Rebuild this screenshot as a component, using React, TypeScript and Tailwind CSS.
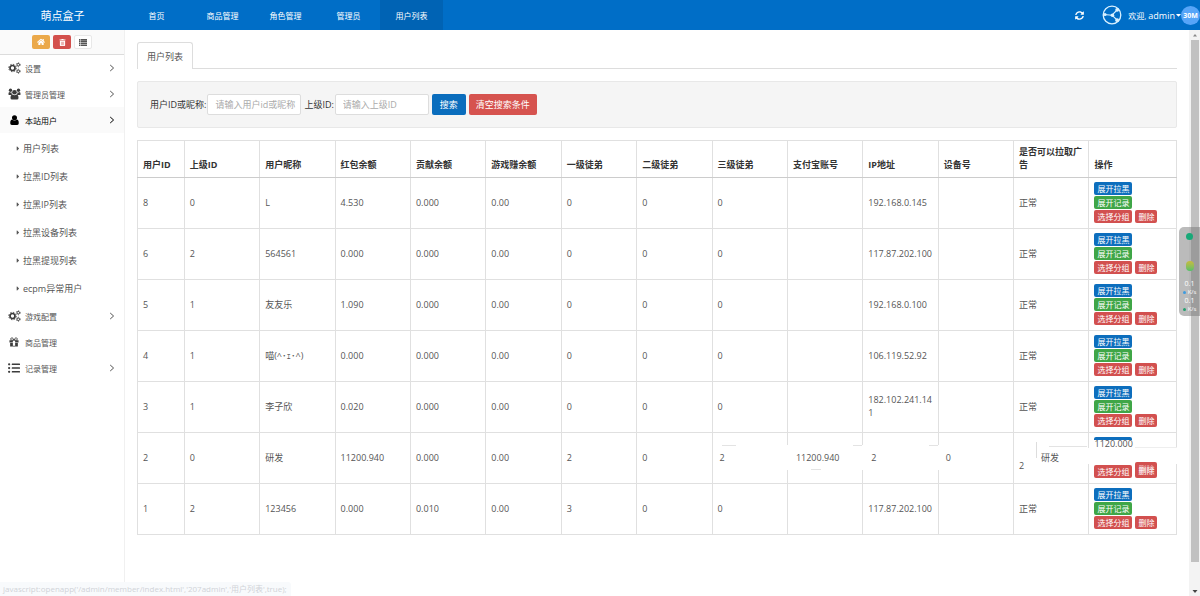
import type { ReactNode } from "react";
import { FaCaretDown, FaCaretRight, FaHome, FaListUl, FaSyncAlt, FaTrashAlt } from "react-icons/fa";

const nav = ["首页", "商品管理", "角色管理", "管理员", "用户列表"];

const subItems = ["用户列表", "拉黑ID列表", "拉黑IP列表", "拉黑设备列表", "拉黑提现列表", "ecpm异常用户"];

function CogsIcon() {
  return (
    <svg viewBox="0 0 26 24" className="h-3 w-[13px]" fill="none" stroke="currentColor">
      <circle cx="9" cy="12" r="5" strokeWidth="3.4" />
      <circle cx="9" cy="12" r="7.4" strokeWidth="2" strokeDasharray="2.9 2.91" />
      <circle cx="20.5" cy="5.5" r="2.6" strokeWidth="2" />
      <circle cx="20.5" cy="5.5" r="4.2" strokeWidth="1.2" strokeDasharray="2 2.4" />
      <circle cx="20.5" cy="18.5" r="2.6" strokeWidth="2" />
      <circle cx="20.5" cy="18.5" r="4.2" strokeWidth="1.2" strokeDasharray="2 2.4" />
    </svg>
  );
}

function GroupIcon() {
  return (
    <svg viewBox="0 0 26 24" className="h-3 w-[13px]" fill="currentColor">
      <circle cx="5" cy="4.5" r="3.3" />
      <circle cx="21" cy="4.5" r="3.3" />
      <path d="M1 13V11q0-3 2-3 2 1.5 4.500 1Q6.500 12.500 8.500 14H3q-2 0-2-1zM25 13V11q0-3-2-3-2 1.500-4.500 1 1 3.500-1 5H23q2 0 2-1z" />
      <circle cx="13" cy="8.500" r="4.600" />
      <path d="M5 20q0-7 4-7 4 2.800 8 0 4 0 4 7 0 3-3 3H8q-3 0-3-3z" />
    </svg>
  );
}

function UserIcon() {
  return (
    <svg viewBox="0 0 20 22" className="h-[10px] w-[9px]" fill="currentColor">
      <circle cx="10" cy="6" r="5.600" />
      <path d="M0.500 18q0-8 4.500-8 5 4.200 10 0 4.500 0 4.500 8 0 4-3.500 4H4q-3.500 0-3.500-4z" />
    </svg>
  );
}

function GiftIcon() {
  return (
    <svg viewBox="0 0 22 22" className="size-[10px]" fill="none" stroke="currentColor">
      <path d="M11 7H6.500a2.600 2.600 0 1 1 2-4.200zM11 7h4.500a2.600 2.600 0 1 0-2-4.200z" strokeWidth="2" />
      <path d="M1 7h7.500v5H1zM13.500 7H21v5h-7.500zM2.500 13h6v8h-6zM13.500 13h6v8h-6z" fill="currentColor" stroke="none" />
      <path d="M8.500 20.300h5" strokeWidth="1.600" />
    </svg>
  );
}

function TableListIcon() {
  return (
    <svg viewBox="0 0 16 14" className="h-[7px] w-2" fill="currentColor">
      <path d="M0 0h3v2.800H0zM4 0h12v2.800H4zM0 3.700h3v2.800H0zM4 3.700h12v2.800H4zM0 7.400h3v2.800H0zM4 7.400h12v2.800H4zM0 11.100h3V14H0zM4 11.100h12V14H4z" />
    </svg>
  );
}

const menu: { label: string; icon: ReactNode; arrow?: boolean; active?: boolean; children?: string[] }[] = [
  { label: "设置", icon: <CogsIcon />, arrow: true },
  { label: "管理员管理", icon: <GroupIcon />, arrow: true },
  { label: "本站用户", icon: <UserIcon />, arrow: true, active: true, children: subItems },
  { label: "游戏配置", icon: <CogsIcon />, arrow: true },
  { label: "商品管理", icon: <GiftIcon /> },
  { label: "记录管理", icon: <FaListUl className="size-[12px]" />, arrow: true },
];

const columns = ["用户ID", "上级ID", "用户昵称", "红包余额", "贡献余额", "游戏赚余额", "一级徒弟", "二级徒弟", "三级徒弟", "支付宝账号", "IP地址", "设备号", "是否可以拉取广告", "操作"];

const rows = [
  ["8", "0", "L", "4.530", "0.000", "0.00", "0", "0", "0", "", "192.168.0.145", "", "正常"],
  ["6", "2", "564561", "0.000", "0.000", "0.00", "0", "0", "0", "", "117.87.202.100", "", "正常"],
  ["5", "1", "友友乐", "1.090", "0.000", "0.00", "0", "0", "0", "", "192.168.0.100", "", "正常"],
  ["4", "1", "喵(^･ｪ･^)", "0.000", "0.000", "0.00", "0", "0", "0", "", "106.119.52.92", "", "正常"],
  ["3", "1", "李子欣", "0.020", "0.000", "0.00", "0", "0", "0", "", "182.102.241.141", "", "正常"],
  ["2", "0", "研发", "11200.940", "0.000", "0.00", "2", "0", "2", "11200.940", "2", "0", "2"],
  ["1", "2", "123456", "0.000", "0.010", "0.00", "3", "0", "0", "", "117.87.202.100", "", "正常"],
];

function Chevron() {
  return (
    <svg viewBox="0 0 6 8" className="h-2 w-1.5" fill="none" stroke="currentColor" strokeWidth="1">
      <path d="M1.2 1 4.6 4 1.2 7" />
    </svg>
  );
}

function Sidebar() {
  return (
    <aside className="flex w-[125px] shrink-0 flex-col border-r border-[#f0f0f0] bg-white">
      <div className="flex h-[25px] items-center justify-center gap-[3px] border-b border-[#dcdcdc] bg-[#fafafa]">
        <button aria-label="主页" className="flex h-[14px] w-[18px] items-center justify-center rounded-[2px] bg-[#eba94a] text-white"><FaHome className="size-[8px]" /></button>
        <button aria-label="清空" className="flex h-[14px] w-[18px] items-center justify-center rounded-[2px] bg-[#d3504d] text-white"><FaTrashAlt className="size-[7px]" /></button>
        <button aria-label="列表" className="flex h-[14px] w-[18px] items-center justify-center rounded-[2px] border border-[#e8e8e8] bg-white text-[#555]"><TableListIcon /></button>
      </div>
      <ul className="text-[#555]">
        {menu.map((m) => (
          <li key={m.label}>
            <a href="#" className={m.active ? "flex h-[26px] items-center bg-[#fafafa] pr-[9px] pl-[7px] text-black" : "flex h-[26px] items-center pr-[9px] pl-[7px]"}>
              <span className={m.active ? "flex w-[14px] justify-center" : "flex w-[14px] justify-center text-[#3c3c3c]"}>{m.icon}</span>
              <span className="ml-1 flex-1 text-[8px]">{m.label}</span>
              {m.arrow && <Chevron />}
            </a>
            {m.children && (
              <ul className="my-px">
                {m.children.map((s) => (
                  <li key={s}>
                    <a href="#" className="flex h-7 items-center gap-[3px] pl-4">
                      <FaCaretRight className="h-[7px] w-1" />
                      {s}
                    </a>
                  </li>
                ))}
              </ul>
            )}
          </li>
        ))}
      </ul>
    </aside>
  );
}

function Header() {
  return (
    <header className="flex h-[30px] shrink-0 items-center bg-[#006ec7] text-white">
      <div className="w-[125px] text-center text-[11px]">萌点盒子</div>
      <nav className="flex h-full text-[8px]">
        {nav.map((n, i) => (
          <a key={n} href="#" className={i === 4 ? "flex w-[63px] items-center justify-center bg-[#0063b4]" : i === 0 ? "mr-[3px] flex w-[63px] items-center justify-center" : "flex w-[63px] items-center justify-center"}>{n}</a>
        ))}
      </nav>
      <div className="ml-auto flex items-center">
        <button aria-label="刷新"><FaSyncAlt className="size-[9px]" /></button>
        <svg viewBox="0 0 20 20" className="ml-[18px] size-5" fill="none" stroke="#d9f1ff" strokeWidth="1.3">
          <circle cx="10" cy="10" r="8.8" />
          <path d="M2 9.5 10 10.2 15 5M10 10.2 15 15" strokeWidth="1.1" />
          <g fill="#d9f1ff" stroke="none">
            <circle cx="3" cy="9.5" r="1.6" />
            <circle cx="10.4" cy="10.2" r="1.8" />
            <circle cx="15.2" cy="4.8" r="1.9" />
            <circle cx="15.2" cy="15.2" r="1.9" />
          </g>
        </svg>
        <button className="ml-[6px] flex items-center gap-px whitespace-nowrap">
          <span className="text-[9px]"><span className="text-[8px]">欢迎, </span>admin</span>
          <FaCaretDown className="h-2 w-[5px]" />
        </button>
        <span className="flex size-[19px] items-center justify-center rounded-full bg-[#57a5f8] text-[7px] font-bold">30M</span>
      </div>
    </header>
  );
}

function Actions() {
  return (
    <div className="flex flex-col items-start gap-px text-[8px] leading-[13px] text-white">
      <button className="h-[13px] rounded-[2px] bg-[#0d6ebd] px-[3px]">展开拉黑</button>
      <button className="h-[13px] rounded-[2px] bg-[#3fa647] px-[3px]">展开记录</button>
      <div className="flex gap-[3px]">
        <button className="h-[13px] rounded-[2px] bg-[#d2504f] px-[3px]">选择分组</button>
        <button className="h-[13px] rounded-[2px] bg-[#d2504f] px-[3px]">删除</button>
      </div>
    </div>
  );
}

function PatchedActions() {
  return (
    <div className="relative flex h-[41px] flex-col justify-between text-[8px] leading-[13px] text-white">
      <div className="absolute top-[11px] -right-[7px] -left-[7px] h-[16px] bg-white" />
      <div className="absolute top-[10px] -right-[6px] w-[42px] border-t border-[#eee]" />
      <div className="relative text-[9px] text-[#555]">1120.000</div>
      <div className="absolute top-0 left-0 h-[3px] w-[38px] rounded-t-[2px] bg-[#0d6ebd]" />
      <div className="flex items-end gap-[3px]">
        <button className="h-[13px] rounded-[2px] bg-[#d2504f] px-[3px]">选择分组</button>
        <button className="relative h-4 rounded-[2px] bg-[#d2504f] px-[3px] pt-px [text-shadow:0_-2px_0_#ffffff99]">删除</button>
      </div>
    </div>
  );
}

function PatchedCell({ index, value }: { index: number; value: string }) {
  if (index === 12) {
    return (
      <div className="relative pt-4">
        {value}
        <span className="absolute top-[3px] -right-1 w-[38px] border-t border-[#e3e3e3]" />
        <span className="absolute -top-px left-[17px] h-4 border-l border-[#ddd]" />
        <span className="absolute top-[8px] left-[22px] whitespace-nowrap">研发</span>
      </div>
    );
  }
  if (index === 11) {
    return <div className="relative -ml-[6px] bg-white py-[6px] pl-2">{value}</div>;
  }
  return (
    <div className={index === 8 ? "relative -mr-[6px] bg-white py-[6px] pl-[2px]" : "relative -mx-[6px] bg-white py-[6px] pl-[9px]"}>
      {value}
      <span className={index === 8 ? "absolute top-0 left-1 w-[14px] border-t border-[#e3e3e3]" : "absolute top-0 right-0 w-[10px] border-t border-[#e3e3e3]"} />
      {index === 9 && <span className="absolute bottom-0 left-6 w-[10px] border-t border-[#e3e3e3]" />}
    </div>
  );
}

function UserTable() {
  return (
    <table className="mt-3 w-full table-fixed border-collapse border border-[#e0e0e0] leading-[13px] text-[#555]">
      <colgroup>
        {columns.map((c, i) => (
          <col key={c} className={i === 0 ? "w-[4.5%]" : i === 13 ? "w-[8.4%]" : "w-[7.25%]"} />
        ))}
      </colgroup>
      <thead>
        <tr>
          {columns.map((c) => (
            <th key={c} className="h-[36px] border border-[#e0e0e0] border-b-[#ccc] px-[5px] pt-1 pb-[6px] text-left align-bottom font-bold text-[#333]">{c}</th>
          ))}
        </tr>
      </thead>
      <tbody>
        {rows.map((r) => (
          <tr key={r[0]}>
            {r.map((v, i) => (
              <td key={columns[i]} className="h-[51px] border border-[#e0e0e0] px-[5px] pb-[2px] break-all">
                {r[0] === "2" && i > 7 ? <PatchedCell index={i} value={v} /> : v}
              </td>
            ))}
            <td className="border border-[#e0e0e0] px-[5px] pb-[2px]">{r[0] === "2" ? <PatchedActions /> : <Actions />}</td>
          </tr>
        ))}
      </tbody>
    </table>
  );
}

export default function App() {
  return (
    <div className="relative flex h-screen flex-col overflow-hidden bg-white text-[9px] leading-[13px] [font-family:'Open_Sans','Noto_Sans_CJK_SC',sans-serif]">
      <Header />
      <div className="flex min-h-0 flex-1">
        <Sidebar />
        <main className="min-w-0 flex-1 overflow-hidden px-3 pt-3">
          <div className="flex border-b border-[#ddd]" role="tablist">
            <button role="tab" aria-selected="true" className="-mb-px h-[27px] rounded-t-[3px] border border-b-0 border-[#ddd] bg-white px-[9px] text-[#555]">用户列表</button>
          </div>
          <form className="mt-3 flex h-[47px] items-center rounded-[2px] border border-[#e8e8e8] bg-[#f5f5f5] px-3 text-[#333]" onSubmit={(e) => e.preventDefault()}>
            <label htmlFor="uid">用户ID或昵称:</label>
            <input id="uid" placeholder="请输入用户id或昵称" className="ml-px h-[21px] w-[94px] rounded-[2px] border border-[#ddd] bg-white pr-[2px] pl-[7px] placeholder:text-[#aaa]" />
            <label htmlFor="pid" className="ml-[3px]">上级ID:</label>
            <input id="pid" placeholder="请输入上级ID" className="ml-px h-[21px] w-[94px] rounded-[2px] border border-[#ddd] bg-white pr-[2px] pl-[7px] placeholder:text-[#aaa]" />
            <button className="ml-[3px] h-[21px] rounded-[2px] bg-[#0a6dbd] px-2 text-white">搜索</button>
            <button type="reset" className="ml-[3px] h-[21px] rounded-[2px] bg-[#d6534f] px-[7px] text-white">清空搜索条件</button>
          </form>
          <UserTable />
        </main>
        <div className="flex w-[11px] shrink-0 flex-col items-center justify-between bg-[#f3f3f3]" aria-hidden="true">
          <svg viewBox="0 0 8 10" className="h-[10px] w-2"><path d="M2 6.5 4 4l2 2.5z" fill="#888" /></svg>
          <div className="mb-[24px] w-2 flex-1 bg-[#c1c1c1]" />
          <svg viewBox="0 0 8 10" className="h-[10px] w-2"><path d="M1.5 4h5L4 7z" fill="#444" /></svg>
        </div>
      </div>
      <div className="absolute bottom-0 left-0 h-[14px] rounded-tr-[3px] bg-[#f8fafc] pr-1 pl-[3px] text-[8px] whitespace-nowrap text-[#d0d3d8]">
        javascript:openapp('/admin/member/index.html','207admin','用户列表',true);
      </div>
      <div className="absolute top-[227px] right-0 flex h-[89px] w-[21px] flex-col items-center rounded-l-[5px] bg-[#777]/50 pt-[6px] text-[7px] leading-[8px] text-white">
        <span className="size-[7px] rounded-full bg-[#18a978]" />
        <span className="mt-[21px] h-[10px] w-[8px] rounded-full bg-linear-to-b from-[#c5bb3c] to-[#4fc069]" />
        <span className="mt-[9px]">0.1</span>
        <span className="flex items-center gap-[2px] text-[6px]"><i className="size-[3px] rounded-full bg-[#3d9be0]" />K/s</span>
        <span className="mt-px">0.1</span>
        <span className="flex items-center gap-[2px] text-[6px]"><i className="size-[3px] rounded-full bg-[#25a06f]" />K/s</span>
      </div>
    </div>
  );
}
